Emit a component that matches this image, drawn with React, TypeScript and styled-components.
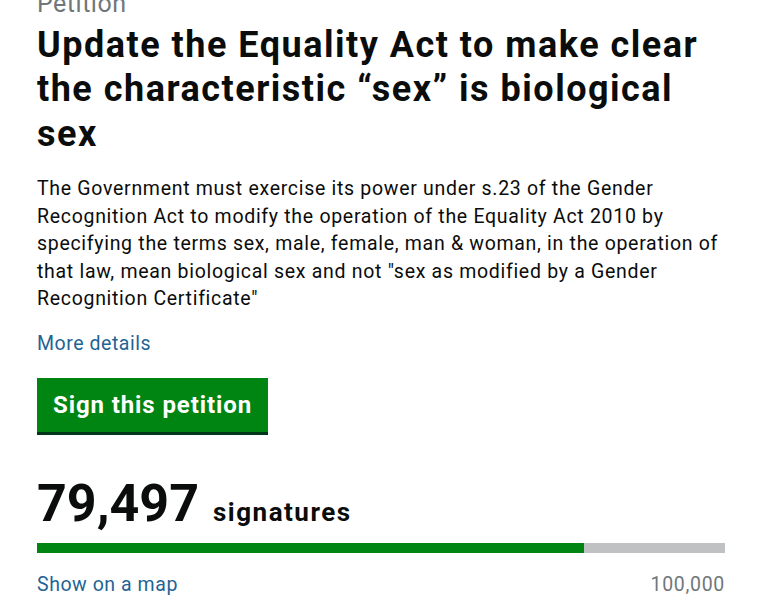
import React from 'react';
import styled, { createGlobalStyle } from 'styled-components';

const GlobalStyle = createGlobalStyle`
    html, body {
        margin: 0;
        padding: 0;
        background: #ffffff;
    }

    body {
        font-family: Roboto, "Noto Sans", "Liberation Sans", sans-serif;
        color: #0b0c0c;
        overflow: hidden;
    }
`;

const signatures = 79497;
const target = 100000;

function App() {
    const progress = Math.min(100, (signatures / target) * 100);

    return (
        <>
            <GlobalStyle/>
            <Page>
                <Caption>Petition</Caption>
                <Title>Update the Equality Act to make clear the characteristic “sex” is biological sex</Title>
                <Summary>
                    The Government must exercise its power under s.23 of the Gender Recognition Act to modify
                    the operation of the Equality Act 2010 by specifying the terms sex, male, female, man &amp;
                    woman, in the operation of that law, mean biological sex and not "sex as modified by a
                    Gender Recognition Certificate"
                </Summary>
                <Link href="#">More details</Link>
                <SignButton type="button">Sign this petition</SignButton>
                <Count>
                    <CountNumber>{signatures.toLocaleString('en-GB')}</CountNumber>
                    <CountLabel>signatures</CountLabel>
                </Count>
                <Progress>
                    <ProgressFill style={{ width: `${progress}%` }}/>
                </Progress>
                <Footer>
                    <Link href="#">Show on a map</Link>
                    <Target>{target.toLocaleString('en-GB')}</Target>
                </Footer>
            </Page>
        </>
    )
}

const Page = styled.main`
    display: flex;
    flex-direction: column;
    align-items: flex-start;

    width: 688px;
    padding: 0 32px 0 37px;
`;

const Caption = styled.span`
    margin-top: -11.5px;

    font-size: 25px;
    line-height: 30px;
    letter-spacing: 0.5px;
    color: #6f777b;
`;

const Title = styled.h1`
    margin: 4px 0 0;

    font-size: 36px;
    line-height: 44.6px;
    font-weight: 700;
    letter-spacing: 1.5px;
    color: #0b0c0c;
`;

const Summary = styled.p`
    margin: 19px 0 0;

    font-size: 19.5px;
    line-height: 27.5px;
    letter-spacing: 0.7px;
    color: #0b0c0c;
`;

const Link = styled.a`
    margin-top: 17px;

    font-size: 19.5px;
    line-height: 27.5px;
    letter-spacing: 0.55px;
    color: #1f6493;
    text-decoration: none;
`;

const SignButton = styled.button`
    margin-top: 21px;
    padding: 0 16px;

    height: 54px;

    border: none;
    border-radius: 0;
    background-color: #008412;
    box-shadow: 0 3px 0 #00361a;

    font-family: inherit;
    font-size: 24px;
    font-weight: 700;
    letter-spacing: 0.9px;
    color: #ffffff;
    cursor: pointer;
`;

const Count = styled.div`
    display: flex;
    align-items: baseline;
    gap: 14px;

    margin-top: 46px;
`;

const CountNumber = styled.span`
    font-size: 52px;
    line-height: 52px;
    font-weight: 700;
`;

const CountLabel = styled.span`
    font-size: 26px;
    font-weight: 700;
    letter-spacing: 1.5px;
`;

const Progress = styled.div`
    display: flex;

    width: 100%;
    height: 10px;
    margin-top: 13px;

    background-color: #bfc1c3;
`;

const ProgressFill = styled.div`
    height: 100%;

    background-color: #008412;
`;

const Footer = styled.div`
    display: flex;
    justify-content: space-between;
    align-items: baseline;

    width: 100%;
    margin-top: 2px;

    > a {
        margin-top: 16px;
    }
`;

const Target = styled.span`
    font-size: 19.5px;
    line-height: 27.5px;
    letter-spacing: 0.7px;
    color: #6f777b;
`;

export default App;
